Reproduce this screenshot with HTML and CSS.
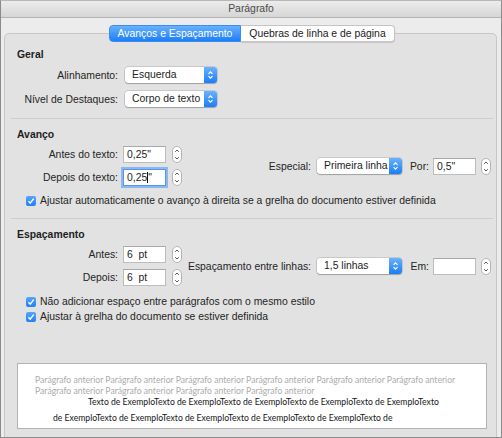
FILE: index.html
```html
<html>
<head>
<meta http-equiv="Content-Type" content="text/html; charset=UTF-8">
<link rel="stylesheet" href="styles.css">
</head>
<body>

<div class="window">
    <div class="titlebar">Parágrafo</div>

    <div class="content">
        <div class="tabs">
            <div class="tab tab-active">Avanços e Espaçamento</div>
            <div class="tab tab-other">Quebras de linha e de página</div>
        </div>

        <div class="panel">

            <!-- Geral -->
            <div class="section section-sep section-first">
                <div class="heading">Geral</div>
                <div class="row row-tall">
                    <span class="label">Alinhamento:</span>
                    <div class="popup popup-wide">
                        <span class="popup-text">Esquerda</span>
                        <span class="popup-arrows">
                            <svg width="7" height="10" viewBox="0 0 7 10"><path d="M1.5 3.8 L3.5 1.8 L5.5 3.8 M1.5 6.2 L3.5 8.2 L5.5 6.2" fill="none" stroke="#fff" stroke-width="1.2"/></svg>
                        </span>
                    </div>
                </div>
                <div class="row row-tall">
                    <span class="label">Nível de Destaques:</span>
                    <div class="popup popup-wide">
                        <span class="popup-text">Corpo de texto</span>
                        <span class="popup-arrows">
                            <svg width="7" height="10" viewBox="0 0 7 10"><path d="M1.5 3.8 L3.5 1.8 L5.5 3.8 M1.5 6.2 L3.5 8.2 L5.5 6.2" fill="none" stroke="#fff" stroke-width="1.2"/></svg>
                        </span>
                    </div>
                </div>
            </div>

            <!-- Avanço -->
            <div class="section section-sep section-mid">
                <div class="heading">Avanço</div>
                <div class="split">
                    <div class="split-left">
                        <div class="row">
                            <span class="label">Antes do texto:</span>
                            <div class="field">0,25"</div>
                            <svg class="stepper" width="10" height="17" viewBox="0 0 10 17"><rect x="0.5" y="0.5" width="9" height="16" rx="4.5" fill="#fff" stroke="#b4b4b4"/><path d="M3.2 5.8 L5 4 L6.8 5.8 M3.2 11.2 L5 13 L6.8 11.2" fill="none" stroke="#555" stroke-width="1"/></svg>
                        </div>
                        <div class="row">
                            <span class="label">Depois do texto:</span>
                            <div class="field field-focus">0,25<span class="caret"></span>"</div>
                            <svg class="stepper" width="10" height="17" viewBox="0 0 10 17"><rect x="0.5" y="0.5" width="9" height="16" rx="4.5" fill="#fff" stroke="#b4b4b4"/><path d="M3.2 5.8 L5 4 L6.8 5.8 M3.2 11.2 L5 13 L6.8 11.2" fill="none" stroke="#555" stroke-width="1"/></svg>
                        </div>
                    </div>
                    <div class="split-right">
                        <span class="side-label">Especial:</span>
                        <div class="popup popup-side">
                            <span class="popup-text">Primeira linha</span>
                            <span class="popup-arrows">
                                <svg width="7" height="10" viewBox="0 0 7 10"><path d="M1.5 3.8 L3.5 1.8 L5.5 3.8 M1.5 6.2 L3.5 8.2 L5.5 6.2" fill="none" stroke="#fff" stroke-width="1.2"/></svg>
                            </span>
                        </div>
                        <span class="short-label">Por:</span>
                        <div class="field">0,5"</div>
                        <svg class="stepper stepper-side" width="10" height="17" viewBox="0 0 10 17"><rect x="0.5" y="0.5" width="9" height="16" rx="4.5" fill="#fff" stroke="#b4b4b4"/><path d="M3.2 5.8 L5 4 L6.8 5.8 M3.2 11.2 L5 13 L6.8 11.2" fill="none" stroke="#555" stroke-width="1"/></svg>
                    </div>
                </div>
                <div class="check-row check-row-first">
                    <span class="check"><svg width="10" height="10" viewBox="0 0 10 10"><path d="M2.4 5.2 L4.2 7.1 L7.7 2.6" fill="none" stroke="#fff" stroke-width="1.4"/></svg></span>
                    Ajustar automaticamente o avanço à direita se a grelha do documento estiver definida
                </div>
            </div>

            <!-- Espaçamento -->
            <div class="section section-mid">
                <div class="heading">Espaçamento</div>
                <div class="split">
                    <div class="split-left">
                        <div class="row">
                            <span class="label">Antes:</span>
                            <div class="field">6  pt</div>
                            <svg class="stepper" width="10" height="17" viewBox="0 0 10 17"><rect x="0.5" y="0.5" width="9" height="16" rx="4.5" fill="#fff" stroke="#b4b4b4"/><path d="M3.2 5.8 L5 4 L6.8 5.8 M3.2 11.2 L5 13 L6.8 11.2" fill="none" stroke="#555" stroke-width="1"/></svg>
                        </div>
                        <div class="row">
                            <span class="label">Depois:</span>
                            <div class="field">6  pt</div>
                            <svg class="stepper" width="10" height="17" viewBox="0 0 10 17"><rect x="0.5" y="0.5" width="9" height="16" rx="4.5" fill="#fff" stroke="#b4b4b4"/><path d="M3.2 5.8 L5 4 L6.8 5.8 M3.2 11.2 L5 13 L6.8 11.2" fill="none" stroke="#555" stroke-width="1"/></svg>
                        </div>
                    </div>
                    <div class="split-right">
                        <span class="side-label">Espaçamento entre linhas:</span>
                        <div class="popup popup-side">
                            <span class="popup-text">1,5 linhas</span>
                            <span class="popup-arrows">
                                <svg width="7" height="10" viewBox="0 0 7 10"><path d="M1.5 3.8 L3.5 1.8 L5.5 3.8 M1.5 6.2 L3.5 8.2 L5.5 6.2" fill="none" stroke="#fff" stroke-width="1.2"/></svg>
                            </span>
                        </div>
                        <span class="short-label">Em:</span>
                        <div class="field"></div>
                        <svg class="stepper stepper-side" width="10" height="17" viewBox="0 0 10 17"><rect x="0.5" y="0.5" width="9" height="16" rx="4.5" fill="#fff" stroke="#b4b4b4"/><path d="M3.2 5.8 L5 4 L6.8 5.8 M3.2 11.2 L5 13 L6.8 11.2" fill="none" stroke="#555" stroke-width="1"/></svg>
                    </div>
                </div>
                <div class="check-row check-row-first">
                    <span class="check"><svg width="10" height="10" viewBox="0 0 10 10"><path d="M2.4 5.2 L4.2 7.1 L7.7 2.6" fill="none" stroke="#fff" stroke-width="1.4"/></svg></span>
                    Não adicionar espaço entre parágrafos com o mesmo estilo
                </div>
                <div class="check-row">
                    <span class="check"><svg width="10" height="10" viewBox="0 0 10 10"><path d="M2.4 5.2 L4.2 7.1 L7.7 2.6" fill="none" stroke="#fff" stroke-width="1.4"/></svg></span>
                    Ajustar à grelha do documento se estiver definida
                </div>
            </div>

            <!-- preview of the paragraph -->
            <div class="preview">
                <div class="prev-gray">Parágrafo anterior Parágrafo anterior Parágrafo anterior Parágrafo anterior Parágrafo anterior Parágrafo anterior</div>
                <div class="prev-gray">Parágrafo anterior Parágrafo anterior Parágrafo anterior Parágrafo anterior</div>
                <div class="prev-text prev-line-first">Texto de ExemploTexto de ExemploTexto de ExemploTexto de ExemploTexto de ExemploTexto</div>
                <div class="prev-text prev-line-second">de ExemploTexto de ExemploTexto de ExemploTexto de ExemploTexto de ExemploTexto de</div>
            </div>

        </div>
    </div>
</div>

</body>
</html>
```

FILE: styles.css
```css
body {
    margin: 0;
    background: #ececec;
    font-family: "Liberation Sans", Arial, sans-serif;
    font-size: 10.4px;
    color: #242424;
}

.window {
    width: 502px;
    height: 438px;
    box-sizing: border-box;
    border: 1px solid #8a8a8a;
    border-top-color: #b8b8b8;
    background: #ececec;
    display: flex;
    flex-direction: column;
    overflow: hidden;
}

.titlebar {
    height: 16px;
    line-height: 16px;
    flex: none;
    text-align: center;
    color: #4a4a4a;
    background: linear-gradient(#ececec, #d6d6d6);
    border-bottom: 1px solid #b3b3b3;
}

.content {
    flex: 1;
    display: flex;
    flex-direction: column;
    padding: 7px 4px 0 3px;
}

/* segmented tabs */
.tabs {
    display: flex;
    justify-content: center;
    margin-left: 3px;
    position: relative;
    z-index: 1;
}

.tab {
    height: 17px;
    line-height: 15px;
    box-sizing: border-box;
    text-align: center;
    white-space: nowrap;
}

.tab-active {
    width: 132px;
    color: #fff;
    background: linear-gradient(#68b1fc, #1c7ff8);
    border: 1px solid #3a8cf3;
    border-radius: 4px 0 0 4px;
}

.tab-other {
    width: 154px;
    color: #1a1a1a;
    background: #fff;
    border: 1px solid #c4c4c4;
    border-left: none;
    border-radius: 0 4px 4px 0;
    box-shadow: 0 1px 1px rgba(0, 0, 0, 0.12);
}

.panel {
    flex: 1;
    margin-top: -9px;
    margin-bottom: -8px;
    padding: 13px 3px 0 6px;
    background: #e2e2e2;
    border: 1px solid #c7c7c7;
    border-radius: 5px;
}

.section {
    padding: 0 2px 0 6px;
}

.section-sep {
    border-bottom: 1px solid #cecece;
}

.section-first {
    padding-bottom: 7px;
}

.section-mid {
    padding-top: 8px;
}

.section-mid.section-sep {
    padding-bottom: 10px;
}

.heading {
    font-weight: bold;
    line-height: 16px;
    height: 16px;
    color: #1e1e1e;
}

.row {
    display: flex;
    align-items: center;
    height: 23px;
}

.row-tall {
    height: 24px;
}

.label {
    flex: none;
    width: 101px;
    margin-right: 5px;
    text-align: right;
    white-space: nowrap;
}

/* popup buttons */
.popup {
    display: flex;
    flex: none;
    height: 16px;
    background: #fff;
    border-radius: 3px;
    box-shadow: 0 0 0 0.5px rgba(0, 0, 0, 0.22), 0 1px 1px rgba(0, 0, 0, 0.2);
}

.popup-wide {
    width: 92px;
    margin-left: 2px;
}

.popup-side {
    width: 85px;
    margin-right: 6px;
}

.popup-text {
    flex: 1;
    padding-left: 7px;
    line-height: 16px;
    white-space: nowrap;
    overflow: hidden;
}

.popup-arrows {
    width: 13px;
    flex: none;
    display: flex;
    align-items: center;
    justify-content: center;
    background: linear-gradient(#6ab2fd, #1b7ef8);
    border-radius: 0 3px 3px 0;
}

/* text fields and steppers */
.field {
    flex: none;
    width: 43px;
    height: 17px;
    box-sizing: border-box;
    padding: 0 3px;
    line-height: 15px;
    background: #fff;
    border: 1px solid #bdbdbd;
    border-top-color: #a8a8a8;
    white-space: pre;
}

.field-focus {
    border-color: #5c95e8;
    box-shadow: 0 0 0 2px #8ab6f2;
}

.caret {
    display: inline-block;
    width: 1px;
    height: 11px;
    background: #111;
    vertical-align: -2px;
}

.stepper {
    flex: none;
    margin-left: 6px;
}

.stepper-side {
    margin-left: 5px;
}

.split {
    display: flex;
    align-items: center;
}

.split-left {
    display: flex;
    flex-direction: column;
}

.split-right {
    display: flex;
    align-items: center;
    margin-left: auto;
}

.side-label {
    margin-right: 6px;
    white-space: nowrap;
}

.short-label {
    width: 21px;
    margin-right: 4px;
    text-align: right;
}

/* checkboxes */
.check-row {
    display: flex;
    align-items: center;
    height: 15px;
    padding-left: 9px;
    white-space: nowrap;
}

.check-row-first {
    margin-top: 4px;
}

.section-mid:not(.section-sep) .check-row-first {
    margin-top: 5px;
}

.check {
    width: 10px;
    height: 10px;
    flex: none;
    margin-right: 4px;
    border-radius: 2px;
    background: linear-gradient(#56a6fb, #2080f6);
    display: flex;
}

/* paragraph preview, in a narrow humanist face */
.preview {
    margin: 39px 6px 0;
    height: 66px;
    box-sizing: border-box;
    padding: 10px 0 0 17px;
    background: #fff;
    border: 1px solid #b3b3b3;
    font-family: Lato, "Liberation Sans", sans-serif;
    font-size: 8.65px;
    line-height: 11px;
    white-space: nowrap;
    overflow: hidden;
}

.prev-gray {
    color: #ababab;
}

.prev-text {
    color: #151515;
}

.prev-line-first {
    margin-left: 53px;
}

.prev-line-second {
    margin-left: 18px;
    margin-top: 5px;
}
```
